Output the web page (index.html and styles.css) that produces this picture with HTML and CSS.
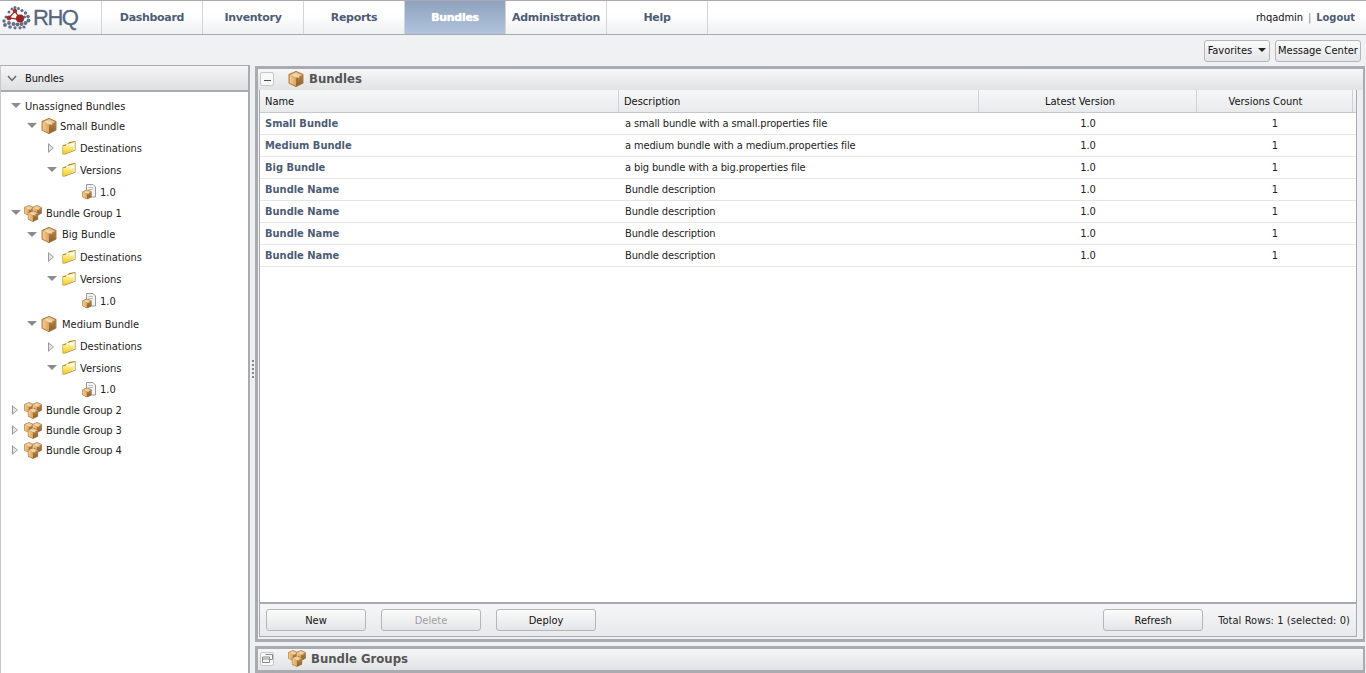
FILE: index.html
```html
<!DOCTYPE html>
<html lang="en">
<head>
<meta charset="utf-8">
<title>RHQ Bundles</title>
<link rel="stylesheet" href="styles.css">
</head>
<body>
<svg class="defs" width="0" height="0" aria-hidden="true">
  <defs>
    <linearGradient id="boxL" x1="0" y1="0" x2="1" y2="0"><stop offset="0" stop-color="#f3cb94"/><stop offset="1" stop-color="#dba35c"/></linearGradient>
    <linearGradient id="boxR" x1="0" y1="0" x2="0" y2="1"><stop offset="0" stop-color="#b98344"/><stop offset="1" stop-color="#8f5f2c"/></linearGradient>
    <linearGradient id="fold" x1="0" y1="0" x2="0" y2="1"><stop offset="0" stop-color="#fff49c"/><stop offset="1" stop-color="#f2c92f"/></linearGradient>
    <symbol id="box" viewBox="1 .5 14 15">
      <path d="M8 1 14.500 3.800V11.800L8 15 1.500 11.800V3.800Z" fill="#a9793f" stroke="#a9793f" stroke-linejoin="round"/>
      <path d="M2 4.200 8 6.800V14.600L2 11.700Z" fill="url(#boxL)"/>
      <path d="M8 6.800 14 4.200V11.700L8 14.600Z" fill="url(#boxR)"/>
      <path d="M8 1.500 14 4.200 8 6.800 2 4.200Z" fill="#ecc995"/>
      <path d="M5 2.900 11 5.500V7.400L5 4.800Z" fill="#f5dfba" opacity=".7"/>
    </symbol>
    <symbol id="boxes" viewBox="0 0 18 17">
      <use href="#box" x="0" y="0" width="10" height="11"/>
      <use href="#box" x="8" y="0" width="10" height="11"/>
      <use href="#box" x="3.500" y="5.500" width="11" height="11.500"/>
    </symbol>
    <symbol id="folder" viewBox="0 0 16 16">
      <path d="M1.500 5.500 7 3.500 8 2 14.500 1 14.500 10.500 4 14.500 1.500 14.500Z" fill="#a88a28"/>
      <path d="M5 4.500 13.800 2 13.800 10 5 13Z" fill="#fffbe0"/>
      <path d="M2 6.200 9.500 4.800 9 7 13 6 12.500 10.300 3.500 14 2.200 14Z" fill="url(#fold)"/>
    </symbol>
    <symbol id="version" viewBox="0 0 16 16">
      <path d="M5.500.5H12L14.500 3V13H5.500Z" fill="#f4f4f4" stroke="#9a9a9a"/>
      <path d="M7.500 3.500H12M7.500 5.500H12" stroke="#bdbdbd"/>
      <use href="#box" x="1" y="5.500" width="10" height="10"/>
    </symbol>
  </defs>
</svg>

<div class="app">
  <header class="topbar">
    <a class="logo">
      <svg class="logo-mark" width="32" height="26" viewBox="0 0 32 26" aria-hidden="true">
        <g fill="#5f7086">
          <circle cx="11" cy="4" r="1.500"/><circle cx="14" cy="2.500" r="1.500"/><circle cx="17.500" cy="3.500" r="1.500"/><circle cx="21" cy="5.500" r="1.600"/><circle cx="24.500" cy="8" r="1.700"/><circle cx="27" cy="11.500" r="1.800"/>
          <circle cx="8" cy="7" r="1.500"/><circle cx="5" cy="12" r="1.500"/><circle cx="3" cy="16" r="1.700"/><circle cx="4" cy="20" r="1.900"/><circle cx="8" cy="18" r="1.900"/><circle cx="9" cy="22" r="1.800"/><circle cx="12.500" cy="19" r="2"/>
          <circle cx="16.500" cy="19.500" r="2"/><circle cx="20.500" cy="19" r="2"/><circle cx="24.500" cy="18" r="2"/><circle cx="27.500" cy="15.500" r="1.900"/><circle cx="14" cy="22.800" r="1.600"/><circle cx="19" cy="22.800" r="1.600"/><circle cx="23" cy="22" r="1.600"/><circle cx="23.500" cy="12" r="1.500"/>
        </g>
        <path d="M14 6 8 13 19 14.500Z" fill="none" stroke="#a62a2a" stroke-width="1.300"/>
        <circle cx="14" cy="6" r="2.200" fill="#a62a2a"/><circle cx="8" cy="13" r="2.400" fill="#a62a2a"/><circle cx="19" cy="13.500" r="4" fill="#9c2222"/>
      </svg>
      <span class="logo-text">RHQ</span>
    </a>
    <nav class="nav">
      <a class="nav-item">Dashboard</a>
      <a class="nav-item">Inventory</a>
      <a class="nav-item">Reports</a>
      <a class="nav-item nav-active">Bundles</a>
      <a class="nav-item">Administration</a>
      <a class="nav-item">Help</a>
    </nav>
    <div class="user"><span class="who">rhqadmin</span><span class="pipe">|</span><a class="logout">Logout</a></div>
  </header>

  <div class="toolbar">
    <button class="tool-btn fav">Favorites <span class="caret"></span></button>
    <button class="tool-btn msg">Message Center</button>
  </div>

  <div class="body">
    <aside class="side">
      <div class="side-head">
        <svg class="chev" width="10" height="7" viewBox="0 0 10 7" aria-hidden="true"><path d="M1 1 5 5.500 9 1" fill="none" stroke="#666" stroke-width="1.400"/></svg>
        <span>Bundles</span>
      </div>
      <div class="tree">
        <div class="node h18 l0"><i class="tw open"></i><span>Unassigned Bundles</span></div>
        <div class="node h22 l1"><i class="tw open"></i><svg class="ic"><use href="#box"/></svg><span>Small Bundle</span></div>
        <div class="node h22 l2"><i class="tw closed"></i><svg class="ic"><use href="#folder"/></svg><span>Destinations</span></div>
        <div class="node h22 l2"><i class="tw open"></i><svg class="ic"><use href="#folder"/></svg><span>Versions</span></div>
        <div class="node h22 l3"><svg class="ic"><use href="#version"/></svg><span>1.0</span></div>
        <div class="node h20 l0"><i class="tw open"></i><svg class="ic wide"><use href="#boxes"/></svg><span class="grp">Bundle Group 1</span></div>
        <div class="node h23 l1"><i class="tw open"></i><svg class="ic"><use href="#box"/></svg><span class="pad">Big Bundle</span></div>
        <div class="node h22 l2"><i class="tw closed"></i><svg class="ic"><use href="#folder"/></svg><span>Destinations</span></div>
        <div class="node h22 l2"><i class="tw open"></i><svg class="ic"><use href="#folder"/></svg><span>Versions</span></div>
        <div class="node h22 l3"><svg class="ic"><use href="#version"/></svg><span>1.0</span></div>
        <div class="node h24 l1"><i class="tw open"></i><svg class="ic"><use href="#box"/></svg><span class="pad">Medium Bundle</span></div>
        <div class="node h21 l2"><i class="tw closed"></i><svg class="ic"><use href="#folder"/></svg><span>Destinations</span></div>
        <div class="node h22 l2"><i class="tw open"></i><svg class="ic"><use href="#folder"/></svg><span>Versions</span></div>
        <div class="node h21 l3"><svg class="ic"><use href="#version"/></svg><span>1.0</span></div>
        <div class="node h20 l0"><i class="tw closed"></i><svg class="ic wide"><use href="#boxes"/></svg><span class="grp">Bundle Group 2</span></div>
        <div class="node h20 l0"><i class="tw closed"></i><svg class="ic wide"><use href="#boxes"/></svg><span class="grp">Bundle Group 3</span></div>
        <div class="node h20 l0"><i class="tw closed"></i><svg class="ic wide"><use href="#boxes"/></svg><span class="grp">Bundle Group 4</span></div>
      </div>
    </aside>

    <div class="splitter"><span class="grip"></span><span class="grip"></span><span class="grip"></span><span class="grip"></span><span class="grip"></span></div>

    <main class="main">
      <section class="panel bundles">
        <div class="panel-head">
          <span class="win-btn"><span class="minus"></span></span>
          <svg class="head-ic"><use href="#box"/></svg>
          <span class="panel-title">Bundles</span>
        </div>
        <div class="grid">
          <div class="row thead">
            <div class="c name">Name</div><div class="c desc">Description</div><div class="c ver">Latest Version</div><div class="c cnt">Versions Count</div><div class="c stub"></div>
          </div>
          <div class="rows">
            <div class="row"><div class="c name link">Small Bundle</div><div class="c desc">a small bundle with a small.properties file</div><div class="c ver">1.0</div><div class="c cnt">1</div></div>
            <div class="row"><div class="c name link">Medium Bundle</div><div class="c desc">a medium bundle with a medium.properties file</div><div class="c ver">1.0</div><div class="c cnt">1</div></div>
            <div class="row"><div class="c name link">Big Bundle</div><div class="c desc">a big bundle with a big.properties file</div><div class="c ver">1.0</div><div class="c cnt">1</div></div>
            <div class="row"><div class="c name link">Bundle Name</div><div class="c desc">Bundle description</div><div class="c ver">1.0</div><div class="c cnt">1</div></div>
            <div class="row"><div class="c name link">Bundle Name</div><div class="c desc">Bundle description</div><div class="c ver">1.0</div><div class="c cnt">1</div></div>
            <div class="row"><div class="c name link">Bundle Name</div><div class="c desc">Bundle description</div><div class="c ver">1.0</div><div class="c cnt">1</div></div>
            <div class="row"><div class="c name link">Bundle Name</div><div class="c desc">Bundle description</div><div class="c ver">1.0</div><div class="c cnt">1</div></div>
          </div>
          <div class="actions">
            <button class="btn">New</button>
            <button class="btn" disabled>Delete</button>
            <button class="btn">Deploy</button>
            <span class="spacer"></span>
            <button class="btn">Refresh</button>
            <span class="total">Total Rows: 1 (selected: 0)</span>
          </div>
        </div>
      </section>
      <section class="panel groups">
        <div class="panel-head">
          <span class="win-btn"><svg width="11" height="9" viewBox="0 0 11 9" aria-hidden="true"><path d="M3.500.5H10.500V5.500H8M.5 3H7.500V8.500H.5ZM.5 5H7.500" fill="none" stroke="#8a8a8a"/></svg></span>
          <svg class="head-ic wide"><use href="#boxes"/></svg>
          <span class="panel-title">Bundle Groups</span>
        </div>
      </section>
    </main>
  </div>
</div>
</body>
</html>
```

FILE: styles.css
```css
* { box-sizing: border-box; }
html, body { margin: 0; height: 100%; overflow: hidden; }
body { font: 11px "DejaVu Sans", sans-serif; font-stretch: condensed; color: #111; background: #f0f1f3; }
.defs { position: absolute; }
.app { height: 673px; display: flex; flex-direction: column; }

.topbar { height: 35px; display: flex; align-items: stretch; border-top: 1px solid #a9abb1; border-bottom: 1px solid #a9abb1; background: linear-gradient(#ffffff 40%, #eff0f2); }
.logo { width: 101px; display: flex; align-items: center; padding-left: 1px; }
.logo-text { font: 22px "Liberation Sans", sans-serif; color: #566880; letter-spacing: -1.5px; -webkit-text-stroke: .3px #566880; }
.nav { display: flex; border-left: 1px solid #d3d4d7; }
.nav-item { width: 101px; display: flex; align-items: center; justify-content: center; border-right: 1px solid #d3d4d7; font: bold 11px "DejaVu Sans", sans-serif; letter-spacing: -.3px; color: #4d5c75; }
.nav-active { color: #fff; background: linear-gradient(#8ea2bd, #b3c5dd); text-shadow: 0 0 1px #fff; }
.user { margin-left: auto; display: flex; align-items: center; gap: 5px; padding-right: 11px; }
.who { letter-spacing: -.08px; }
.pipe { color: #6f8bab; }
.logout { font: bold 11px "DejaVu Sans", sans-serif; font-stretch: condensed; color: #4d5c75; }

.toolbar { height: 30px; display: flex; justify-content: flex-end; align-items: flex-start; gap: 5px; padding: 5px 5px 0 0; background: #f0f1f3; }
.tool-btn { height: 22px; padding: 0 0 2px; font: 11px "DejaVu Sans", sans-serif; font-stretch: condensed; color: #111; border: 1px solid #b4b6ba; border-radius: 3px; background: linear-gradient(#fbfbfb, #e4e5e7); }
.fav { width: 66px; }
.msg { width: 86px; }
.caret { display: inline-block; width: 0; height: 0; margin-left: 3px; vertical-align: 2px; border: 4px solid transparent; border-top: 4px solid #222; border-bottom: 0; }

.body { flex: 1; min-height: 0; display: flex; }
.side { width: 250px; display: flex; flex-direction: column; border-top: 1px solid #a9abb1; border-right: 2px solid #a9abb1; border-left: 1px solid #c8c9cc; }
.side-head { height: 26px; display: flex; align-items: center; gap: 8px; padding-left: 6px; letter-spacing: -.1px; background: linear-gradient(#f5f5f6, #dfe0e2); border-bottom: 2px solid #a9abb1; }
.chev { flex: none; }
.tree { flex: 1; background: #fff; padding-top: 5px; }
.node { display: flex; align-items: center; white-space: nowrap; color: #222; }
.h18 { height: 18px; } .h20 { height: 20px; } .h21 { height: 21px; } .h22 { height: 22px; } .h23 { height: 23px; } .h24 { height: 24px; }
.l0 { padding-left: 9px; } .l1 { padding-left: 25px; } .l2 { padding-left: 45px; } .l3 { padding-left: 80px; }
.tw { flex: none; width: 12px; height: 10px; margin-right: 3px; position: relative; }
.tw::after, .closed::before { content: ""; position: absolute; width: 0; height: 0; }
.open::after { left: 1px; top: 2px; border: 5px solid transparent; border-top: 5px solid #8b8b8b; border-bottom: 0; }
.closed::before { left: 2px; top: 0; border: 5px solid transparent; border-left: 6px solid #9a9a9a; border-right: 0; }
.closed::after { left: 3px; top: 2px; border: 3px solid transparent; border-left: 4px solid #e6e6e6; border-right: 0; }
.ic { flex: none; width: 16px; height: 16px; margin-right: 3px; }
.ic.wide { width: 18px; height: 17px; margin-left: -1px; margin-right: 4px; }
.grp { letter-spacing: -.1px; }
.pad { padding-left: 2px; }

.splitter { width: 5px; display: flex; flex-direction: column; justify-content: center; align-items: center; gap: 2px; background: #eeeff1; }
.grip { width: 2px; height: 2px; background: #888; }

.main { flex: 1; min-width: 0; display: flex; flex-direction: column; gap: 4px; padding: 1px 1px 0 0; }
.panel { border: 3px solid #a9abb1; border-right-width: 2px; background: #eeeff1; }
.bundles { height: 577px; display: flex; flex-direction: column; }
.groups { height: 27px; }
.panel-head { height: 21px; flex: none; display: flex; align-items: center; padding: 0 0 2px 2px; background: linear-gradient(#f6f6f7, #e2e3e5); }
.win-btn { width: 14px; height: 14px; display: flex; align-items: center; justify-content: center; border: 1px solid #c6c7ca; border-radius: 2px; background: #f8f8f8; }
.minus { width: 7px; height: 1px; margin-top: 4px; background: #555; }
.head-ic { width: 16px; height: 16px; margin-left: 14px; }
.head-ic.wide { width: 18px; height: 17px; }
.panel-title { font: bold 13px "DejaVu Sans", sans-serif; font-stretch: condensed; color: #555; margin-left: 5px; }

.grid { flex: 1; min-height: 0; margin: 0 6px 2px 1px; display: flex; flex-direction: column; background: #fff; border: 1px solid #a9abb1; border-top: 0; }
.row { display: flex; height: 22px; align-items: stretch; border-bottom: 1px solid #e5e6e8; }
.c { display: flex; align-items: center; flex: none; padding-left: 5px; white-space: nowrap; color: #222; }
.name { width: 359px; } .desc { width: 360px; } .ver { width: 218px; padding: 0; justify-content: center; } .cnt { width: 156px; padding: 0; justify-content: center; }
.stub { flex: 1; padding: 0; }
.thead { height: 23px; background: linear-gradient(#f7f7f8, #e9eaec); border-bottom: 1px solid #c8c9cc; }
.thead .c { border-right: 1px solid #d0d1d4; color: #111; }
.thead .ver { padding-right: 15px; }
.thead .cnt { padding-right: 18px; }
.thead .stub { border-right: 0; }
.link { font: bold 11px "DejaVu Sans", sans-serif; font-stretch: condensed; color: #4d5c75; }
.rows { flex: 1; min-height: 0; }
.rows .desc { padding-left: 6px; letter-spacing: -.12px; }
.actions { height: 34px; flex: none; display: flex; align-items: center; padding: 0 6px; gap: 15px; border-top: 2px solid #a9abb1; background: linear-gradient(#f6f6f7, #e8e9eb); }
.btn { width: 100px; height: 22px; padding: 0; font: 11px "DejaVu Sans", sans-serif; font-stretch: condensed; color: #111; border: 1px solid #b4b6ba; border-radius: 3px; background: linear-gradient(#fbfbfb, #e4e5e7); }
.btn:disabled { color: #a0a0a0; }
.spacer { flex: 1; }
.total { color: #222; letter-spacing: .07px; }
```
